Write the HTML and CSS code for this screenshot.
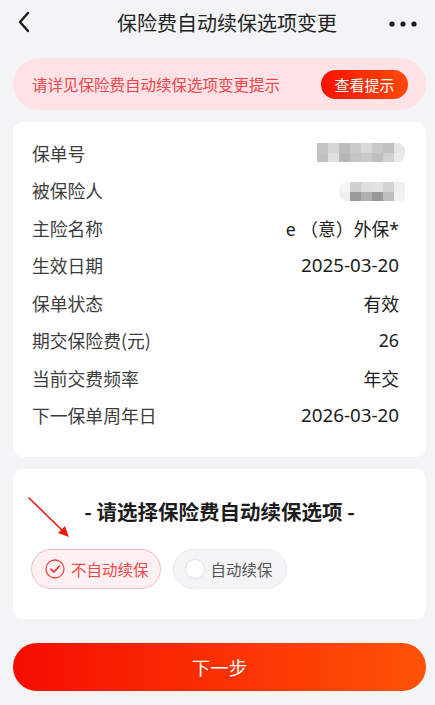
FILE: index.html
```html
<!DOCTYPE html>
<html lang="zh-CN">
  <head>
    <meta charset="UTF-8" />
    <meta name="viewport" content="width=device-width, initial-scale=1" />
    <title>保险费自动续保选项变更</title>
    <link rel="stylesheet" href="styles.css">
  </head>
  <body>
    <header class="nav">
      <svg class="nav-back" width="14" height="22" viewBox="0 0 14 22">
        <path d="M11 2 L3 11 L11 20" fill="none" stroke="#1a1a1a" stroke-width="2.4" stroke-linecap="round" stroke-linejoin="round" />
      </svg>
      <div class="nav-title">保险费自动续保选项变更</div>
      <svg class="nav-more" width="28" height="8" viewBox="0 0 28 8">
        <circle cx="3" cy="4" r="2.6" fill="#1a1a1a" />
        <circle cx="14" cy="4" r="2.6" fill="#1a1a1a" />
        <circle cx="25" cy="4" r="2.6" fill="#1a1a1a" />
      </svg>
    </header>

    <main class="page">
      <div class="notice">
        <span class="notice-text">请详见保险费自动续保选项变更提示</span>
        <button class="notice-btn">查看提示</button>
      </div>

      <section class="card info">
        <div class="row">
          <span class="label">保单号</span>
          <span class="mask mask-long">
            <i style="background:#c4c4c4"></i><i style="background:#d6d6d6"></i><i style="background:#bcbcbc"></i><i style="background:#cacaca"></i><i style="background:#d8d8d8"></i><i style="background:#c8c8c8"></i><i style="background:#c0c0c0"></i><i style="background:#e6e6e6"></i>
            <i style="background:#c0c0c0"></i><i style="background:#e0e0e0"></i><i style="background:#b8b8b8"></i><i style="background:#c4c4c4"></i><i style="background:#cacaca"></i><i style="background:#c0c0c0"></i><i style="background:#d0d0d0"></i><i style="background:#eaeaea"></i>
          </span>
        </div>
        <div class="row">
          <span class="label">被保险人</span>
          <span class="mask mask-short">
            <i style="background:#f4f4f4"></i><i style="background:#cfcfcf"></i><i style="background:#dedede"></i><i style="background:#e2e2e2"></i><i style="background:#d2d2d2"></i><i style="background:#eeeeee"></i>
            <i style="background:#eeeeee"></i><i style="background:#9a9a9a"></i><i style="background:#b0b0b0"></i><i style="background:#989898"></i><i style="background:#bebebe"></i><i style="background:#f2f2f2"></i>
          </span>
        </div>
        <div class="row">
          <span class="label">主险名称</span>
          <span class="value">e （意）外保*</span>
        </div>
        <div class="row">
          <span class="label">生效日期</span>
          <span class="value value-num">2025-03-20</span>
        </div>
        <div class="row">
          <span class="label">保单状态</span>
          <span class="value">有效</span>
        </div>
        <div class="row">
          <span class="label">期交保险费(元)</span>
          <span class="value">26</span>
        </div>
        <div class="row">
          <span class="label">当前交费频率</span>
          <span class="value">年交</span>
        </div>
        <div class="row">
          <span class="label">下一保单周年日</span>
          <span class="value value-num">2026-03-20</span>
        </div>
      </section>

      <section class="card choose">
        <svg class="pointer" width="46" height="46" viewBox="0 0 46 46">
          <path d="M2 2 L40 39" stroke="#f01a10" stroke-width="1.6" stroke-linecap="round" />
          <path d="M42 41 L31 37 L38 30 Z" fill="#f01a10" />
        </svg>
        <h2 class="choose-title">- 请选择保险费自动续保选项 -</h2>
        <div class="options">
          <div class="option option-on">
            <svg class="radio" width="20" height="20" viewBox="0 0 20 20">
              <circle cx="10" cy="10" r="9" fill="none" stroke="#ec4a4a" stroke-width="1.3" />
              <path d="M6 10.2 L9 13 L14.2 7.2" fill="none" stroke="#ec3a3a" stroke-width="1.8" stroke-linecap="round" stroke-linejoin="round" />
            </svg>
            <span>不自动续保</span>
          </div>
          <div class="option">
            <span class="radio radio-empty"></span>
            <span>自动续保</span>
          </div>
        </div>
      </section>

      <button class="next">下一步</button>
    </main>
  </body>
</html>
```

FILE: styles.css
```css
* {
  box-sizing: border-box;
}

html,
body {
  background-color: #f3f4f6;
  color: #222;
  font-family: "Noto Sans CJK SC", "Noto Sans", sans-serif;
  margin: 0;
}

.nav {
  align-items: center;
  display: grid;
  grid-template-columns: 1fr auto 1fr;
  height: 44px;
  padding: 0 18px 0 17px;
}

.nav-title {
  color: #222;
  font-size: 20px;
  margin-left: 20px;
}

.nav-more {
  justify-self: end;
  margin-top: 4px;
}

.page {
  display: flex;
  flex-direction: column;
  gap: 12px;
  padding: 14px 9px 0 13px;
}

.notice {
  align-items: center;
  background-color: #ffe2e5;
  border-radius: 26px;
  display: flex;
  height: 52px;
  justify-content: space-between;
  padding: 0 18px 0 19px;
}

.notice-text {
  color: #f2444a;
  font-size: 15.5px;
}

.notice-btn {
  background: linear-gradient(90deg, #f61400, #ff4a0a);
  border: none;
  border-radius: 15px;
  color: #fff;
  font-family: inherit;
  font-size: 15px;
  height: 29px;
  padding: 0 12px;
  width: 87px;
}

.card {
  background-color: #fff;
  border-radius: 10px;
}

.info {
  padding: 12px 27px 23px 19px;
}

.row {
  align-items: center;
  display: flex;
  height: 37.5px;
  justify-content: space-between;
}

.label {
  color: #3c3c3c;
  font-size: 17.8px;
}

.value {
  color: #1c1c1c;
  font-family: "Noto Sans", "Noto Sans CJK SC", sans-serif;
  font-size: 17.8px;
}

.value-num {
  font-size: 18.8px;
}

.mask {
  display: grid;
  filter: blur(0.6px);
  margin-right: -6px;
}

.mask i {
  display: block;
  height: 9.5px;
}

.mask-long {
  border-radius: 0 8px 8px 0;
  grid-template-columns: repeat(8, 11px);
  overflow: hidden;
}

.mask-short {
  border-radius: 8px 4px 4px 8px;
  grid-template-columns: repeat(6, 11px);
  margin-top: 3px;
  overflow: hidden;
}

.choose {
  padding: 30px 18px 30px 18px;
  position: relative;
}

.pointer {
  left: 14px;
  position: absolute;
  top: 27px;
}

.choose-title {
  color: #1c1c1c;
  font-size: 20.5px;
  font-weight: 700;
  line-height: 24px;
  margin: 0 0 26px;
  text-align: center;
}

.options {
  display: flex;
  gap: 12px;
}

.option {
  align-items: center;
  background-color: #f3f4f6;
  border: 1px solid #ececee;
  border-radius: 20px;
  color: #555;
  display: flex;
  font-size: 15.5px;
  gap: 6px;
  height: 40px;
  padding: 0 13px 0 11px;
}

.option-on {
  background-color: #fff0f1;
  border-color: #f6b9bb;
  color: #f0474b;
  padding: 0 11px 0 13px;
}

.radio-empty {
  background-color: #fff;
  border: 1px solid #e2e2e4;
  border-radius: 50%;
  display: block;
  height: 20px;
  width: 20px;
}

.next {
  background: linear-gradient(90deg, #f50d00, #ff5306);
  border: none;
  border-radius: 24px;
  color: #fff;
  font-family: inherit;
  font-size: 18.5px;
  height: 48px;
  margin-top: 12px;
  width: 100%;
}
```
